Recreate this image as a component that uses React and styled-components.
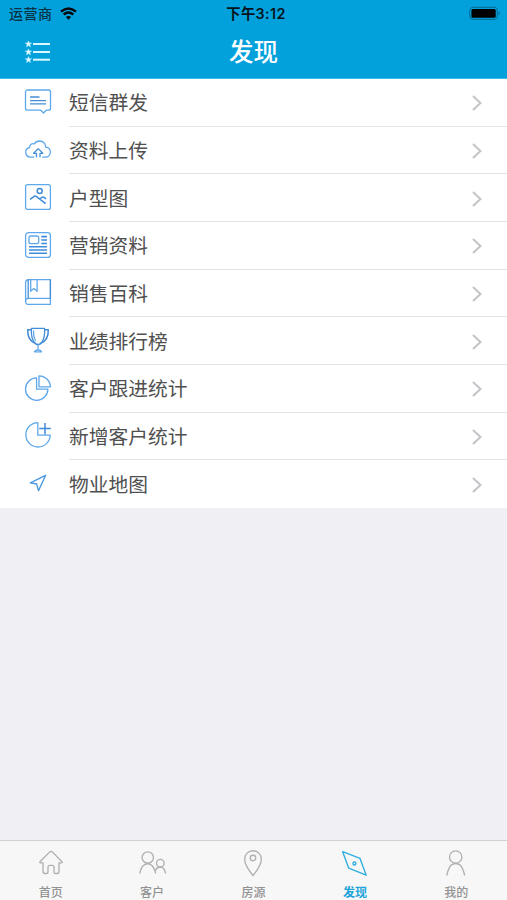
import React from "react";
import styled, { createGlobalStyle } from "styled-components";

const GlobalStyle = createGlobalStyle`
  * { box-sizing: border-box; }
  body {
    margin: 0;
    background: #efeff4;
    font-family: "Inter", "Noto Sans CJK SC", sans-serif;
  }
`;

const Screen = styled.div`
  display: flex;
  flex-direction: column;
  width: 507px;
  height: 900px;
  overflow: hidden;
  background: #efeff4;
`;

const Header = styled.header`
  flex: none;
  height: 79px;
  background: #03a1dc;
  border-bottom: 1px solid #35bde8;
`;

const StatusBar = styled.div`
  display: grid;
  grid-template-columns: 1fr auto 1fr;
  align-items: center;
  height: 27px;
  padding: 0 6px 0 9px;
  color: #06151d;
  font-size: 14px;
  line-height: 20px;
`;

const Carrier = styled.div`
  display: flex;
  align-items: center;
  gap: 7px;
  letter-spacing: 0.5px;
  color: #063346;
  font-weight: 500;
`;

const Clock = styled.div`
  margin-left: 2px;
  font-size: 14.3px;
  font-weight: 600;
  letter-spacing: 0.4px;
`;

const Battery = styled.svg`
  justify-self: end;
`;

const NavBar = styled.div`
  display: grid;
  grid-template-columns: 1fr auto 1fr;
  align-items: center;
  height: 50px;
  padding: 0 25px;
`;

const Title = styled.h1`
  margin: 0;
  color: #fff;
  font-size: 24.5px;
  font-weight: 500;
  line-height: 36px;
`;

const List = styled.main`
  flex: none;
  display: grid;
  grid-template-rows: repeat(9, 1fr);
  height: 429px;
  background: #fff;
`;

const Row = styled.div`
  display: flex;
  padding-left: 25px;
`;

const RowIcon = styled.svg`
  flex: none;
  margin: 9.5px 18px 0 0;
  overflow: visible;
  fill: none;
  stroke: #5fa8ec;
  stroke-width: 1.3;
  stroke-linejoin: round;
`;

const RowBody = styled.div`
  flex: 1;
  display: flex;
  align-items: center;
  justify-content: space-between;
  padding: 2px 24px 0 0;
  border-bottom: 1px solid ${(p) => (p.$last ? "transparent" : "#e3e3e5")};
`;

const Label = styled.span`
  color: #505050;
  font-size: 19.75px;
  line-height: 28px;
`;

const Chevron = styled.svg`
  fill: none;
  stroke: #c4c4c8;
  stroke-width: 2;
`;

const TabBar = styled.nav`
  display: grid;
  grid-template-columns: repeat(5, 1fr);
  height: 60px;
  margin-top: auto;
  background: #f7f7f8;
  border-top: 1px solid #d2d2d6;
`;

const Tab = styled.div`
  display: flex;
  flex-direction: column;
  align-items: center;
  padding-top: 8px;
  color: ${(p) => (p.$active ? "#1da4da" : "#929292")};
  font-size: 12px;
  font-weight: ${(p) => (p.$active ? 700 : 500)};
  line-height: 18px;
`;

const TabIcon = styled.svg`
  display: block;
  margin-bottom: 7px;
  overflow: visible;
  fill: none;
  stroke: ${(p) => (p.$active ? "#2fadde" : "#b0b0b0")};
  stroke-width: 1.35;
  stroke-linejoin: round;
`;

const rows = [
  {
    label: "短信群发",
    icon: (
      <>
        <path d="M2.5 1h21a2 2 0 0 1 2 2v16.2a2 2 0 0 1-2 2h-2.3L18.5 24l-2.7-2.8H2.5a2 2 0 0 1-2-2V3a2 2 0 0 1 2-2z" />
        <path d="M5 8h9.5M5 11.6h16M5 14.8h16" stroke="#468fd8" />
      </>
    ),
  },
  {
    label: "资料上传",
    icon: (
      <>
        <path d="M9.3 21.2H5.4a4.9 4.9 0 0 1-.7-9.7c-.5-2.5 2-4.5 4.5-3.5C10.6 5.8 12.5 5 14.6 5c3.6 0 6.2 2.6 6.1 6.1 2.7.3 4.7 2.4 4.7 5 0 2.9-2.2 5.1-5.1 5.1h-3.1" />
        <path d="M11.5 21.3v-4H8.600l4.600-4.700 4.600 4.700H15v4" stroke="#468fd8" />
      </>
    ),
  },
  {
    label: "户型图",
    icon: (
      <>
        <rect x=".6" y=".6" width="24.8" height="24.8" rx="2" />
        <g stroke="#3f8bd8" strokeWidth="1.5">
          <circle cx="14.7" cy="7" r="2.5" />
          <path d="M5 15.300l4.600-3.200q.8-.4 1.600.2l9.500 7.400M14.800 15l2.500-1.900q.7-.4 1.400.1l2.300 1.700" />
        </g>
      </>
    ),
  },
  {
    label: "营销资料",
    icon: (
      <>
        <rect x=".6" y=".6" width="24.8" height="24.8" rx="3" />
        <rect x="4" y="4" width="9.7" height="7.7" rx="2" />
        <path d="M16.300 4.600H22M16.300 8H22M16.300 11.500H22M4 14.800h18M4 18h18M4 21.200h18" stroke="#3f8bd8" strokeWidth="1.6" />
      </>
    ),
  },
  {
    label: "销售百科",
    icon: (
      <>
        <path d="M25.400 19.300V.6H3.500A2.900 2.900 0 0 0 .6 3.500v19.200a2.800 2.800 0 0 0 2.900 2.700h21.900v-6.100H3.500a2.900 2.900 0 0 0-2.900 2.800" />
        <path d="M3.200.6v18.600M25.400.6v18.700" stroke="#468fd8" />
        <path d="M5.700.8v11.500l3.200-2.700 3.200 2.700V.8" />
      </>
    ),
  },
  {
    label: "业绩排行榜",
    icon: (
      <>
        <path d="M6.400 1.300h13.200q.4 9.500-2.500 13.500-1.700 2.700-4.100 2.700t-4.100-2.700Q6 10.800 6.400 1.300z" stroke="#468fd8" />
        <path d="M6.300 2.800H2.700C2.500 9 5 14.600 10.700 16.500M19.700 2.800h3.600C23.500 9 21 14.600 15.300 16.500" stroke="#3f8bd8" strokeWidth="1.5" />
        <path d="M8.500 3.500q0 7 2.200 10.500M13 17.500v5.600M9.500 24.800q.8-1.800 3.500-1.800t3.500 1.800z" />
      </>
    ),
  },
  {
    label: "客户跟进统计",
    icon: (
      <>
        <path d="M11.600 2.900A11.200 11.200 0 1 0 22.900 14.200H11.600z" />
        <path d="M14 .8v11h11.500A11.500 11.500 0 0 0 14 .8z" />
      </>
    ),
  },
  {
    label: "新增客户统计",
    icon: (
      <>
        <path d="M12.800.6a12.200 12.200 0 1 0 12.400 12.600H12.800z" />
        <path d="M20 1v11.500M14.300 6.600h11.500" stroke="#3f8bd8" strokeWidth="1.5" />
      </>
    ),
  },
  {
    label: "物业地图",
    icon: <path d="M5.300 12.800L20.700 5.300 13.500 20.600 11.600 14z" stroke="#4797e0" strokeWidth="1.3" />,
  },
];

const tabs = [
  {
    label: "首页",
    icon: <path d="M2.500 13.800H5v8.500q0 2.200 2 2.200h1.800q1.200 0 1.200-1.200v-5q0-2 2-2h2q2 0 2 2v5q0 1.200 1.200 1.200H19q2 0 2-2.200v-8.500h2.500q1.200 0 .5-1L14.500 3.100q-1.500-1.400-3 0L2 12.800q-.7 1 .5 1z" />,
  },
  {
    label: "客户",
    icon: (
      <>
        <circle cx="8.8" cy="8.5" r="5.7" />
        <circle cx="21.3" cy="14.2" r="3.8" />
        <path d="M.7 24.700c1.200-6.500 3.900-10 8.100-10 3.700 0 6.300 3 7.900 9.700M16.200 22c1.100-2.800 2.800-4 5.100-4 2.700 0 4.500 2.200 5.300 6.500" />
      </>
    ),
  },
  {
    label: "房源",
    icon: (
      <>
        <path d="M13 26.500C8 20.500 4.700 14.500 4.700 10.200 4.700 5.300 8.200 1.700 13 1.700s8.300 3.600 8.300 8.500C21.300 14.500 18 20.500 13 26.500z" />
        <circle cx="13" cy="9" r="2.8" />
      </>
    ),
  },
  {
    label: "发现",
    active: true,
    icon: (
      <>
        <path d="M.7 2.700L18 9.400 24.200 26.200 6.700 19.200z" />
        <circle cx="12.4" cy="14.500" r="1.5" />
      </>
    ),
  },
  {
    label: "我的",
    icon: (
      <>
        <circle cx="12.7" cy="8" r="6.2" />
        <path d="M3.700 26.500q1.800-7.500 4.300-10.200 2-1.800 4.700-1.800t4.700 1.800q2.500 2.700 4.300 10.200" />
      </>
    ),
  },
];

const star = "M0-3.200L.9-1H3.200L1.400.4 2 2.900 0 1.500-2 2.900-1.400.4-3.200-1H-.9z";

export default function App() {
  return (
    <Screen>
      <GlobalStyle />
      <Header>
        <StatusBar>
          <Carrier>
            运营商
            <svg width="17" height="13" viewBox="0 0 17 13" fill="none" stroke="#02080b" strokeWidth="2.4">
              <path d="M1 4.700q7.500-6.600 15 0M3.700 7.500q4.800-4.200 9.600 0" />
              <path d="M5.900 10q2.600-2.200 5.200 0L8.500 12.700z" fill="#02080b" stroke="none" />
            </svg>
          </Carrier>
          <Clock>下午3:12</Clock>
          <Battery width="32" height="15" viewBox="0 0 32 15">
            <rect x="0.8" y="1.3" width="27.5" height="12" rx="3.2" fill="none" stroke="#04698f" />
            <rect x="2.4" y="3" width="24.3" height="8.8" rx="1.6" fill="#000" />
            <path d="M29.600 5.300q2.600 2 0 4z" fill="#04698f" />
          </Battery>
        </StatusBar>
        <NavBar>
          <svg width="26" height="22" viewBox="0 0 26 22">
            {[3, 11, 18.7].map((y) => (
              <g key={y} transform={`translate(3.5 ${y})`} fill="#d9f8ff">
                <path d={star} stroke="#d9f8ff" strokeWidth=".4" />
                <rect x="4.500" y="-1" width="17" height="2" />
              </g>
            ))}
          </svg>
          <Title>发现</Title>
        </NavBar>
      </Header>
      <List>
        {rows.map((row, i) => (
          <Row key={row.label}>
            <RowIcon width="26" height="26" viewBox="0 0 26 26">{row.icon}</RowIcon>
            <RowBody $last={i === rows.length - 1}>
              <Label>{row.label}</Label>
              <Chevron width="12" height="16" viewBox="0 0 12 16">
                <path d="M2 1l7.500 7L2 15" />
              </Chevron>
            </RowBody>
          </Row>
        ))}
      </List>
      <TabBar>
        {tabs.map((tab) => (
          <Tab key={tab.label} $active={tab.active}>
            <TabIcon $active={tab.active} width="26" height="28" viewBox="0 0 26 28">{tab.icon}</TabIcon>
            {tab.label}
          </Tab>
        ))}
      </TabBar>
    </Screen>
  );
}
